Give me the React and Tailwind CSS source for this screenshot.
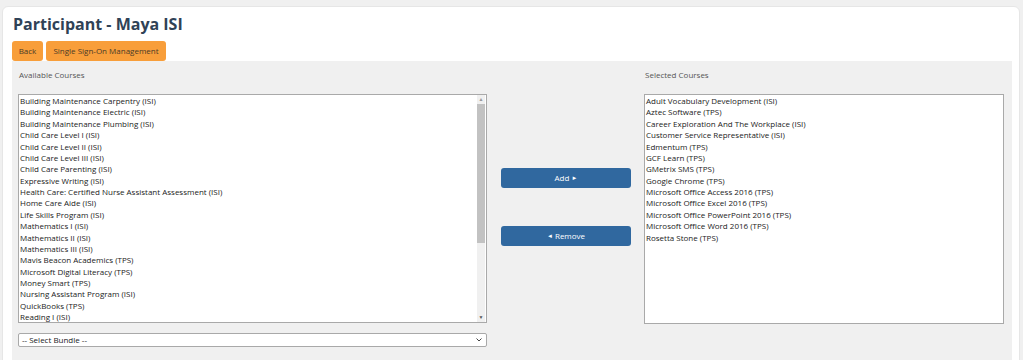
import React from "react";

const available = [
  "Building Maintenance Carpentry (ISI)",
  "Building Maintenance Electric (ISI)",
  "Building Maintenance Plumbing (ISI)",
  "Child Care Level I (ISI)",
  "Child Care Level II (ISI)",
  "Child Care Level III (ISI)",
  "Child Care Parenting (ISI)",
  "Expressive Writing (ISI)",
  "Health Care: Certified Nurse Assistant Assessment (ISI)",
  "Home Care Aide (ISI)",
  "Life Skills Program (ISI)",
  "Mathematics I (ISI)",
  "Mathematics II (ISI)",
  "Mathematics III (ISI)",
  "Mavis Beacon Academics (TPS)",
  "Microsoft Digital Literacy (TPS)",
  "Money Smart (TPS)",
  "Nursing Assistant Program (ISI)",
  "QuickBooks (TPS)",
  "Reading I (ISI)",
];

const selected = [
  "Adult Vocabulary Development (ISI)",
  "Aztec Software (TPS)",
  "Career Exploration And The Workplace (ISI)",
  "Customer Service Representative (ISI)",
  "Edmentum (TPS)",
  "GCF Learn (TPS)",
  "GMetrix SMS (TPS)",
  "Google Chrome (TPS)",
  "Microsoft Office Access 2016 (TPS)",
  "Microsoft Office Excel 2016 (TPS)",
  "Microsoft Office PowerPoint 2016 (TPS)",
  "Microsoft Office Word 2016 (TPS)",
  "Rosetta Stone (TPS)",
];

const font = { fontFamily: '"Open Sans", "Noto Sans", sans-serif' };

export default function App() {
  return (
    <div className="min-h-[360px] bg-[#f0f0f0] pt-[6px] pl-[2px] pr-[3px]" style={font}>
      <div className="bg-white rounded-[6px] border border-[#e6e6e6] pl-[9px] pr-[7px] pt-[3px] min-h-[360px]">
        <h1 className="text-[16px] leading-[28px] font-bold text-[#2f4256] pl-[1px]">
          Participant - Maya ISI
        </h1>
        <div className="flex gap-[3px] mt-[3px]">
          <button className="h-[20px] w-[31px] bg-[#f89e3a] rounded-[3px] text-[8px] text-[#4b3a28] leading-[20px]">
            Back
          </button>
          <button className="h-[20px] w-[120px] bg-[#f89e3a] rounded-[3px] text-[8px] text-[#4b3a28] leading-[20px]">
            Single Sign-On Management
          </button>
        </div>
        <div className="bg-[#f0f0f0] pl-[6px] pr-[8px] pt-[8px] pb-[20px] flex">
          <div className="w-[469px] flex flex-col">
            <div className="text-[8px] leading-[12px] text-[#555] pl-[1px]">Available Courses</div>
            <div className="mt-[13px] h-[229px] border border-[#a9a9a9] bg-white flex overflow-hidden">
              <div className="flex-1 pl-[1px] overflow-hidden">
                {available.map((c) => (
                  <div key={c} className="text-[8px] leading-[11.37px] text-[#222] whitespace-nowrap">
                    {c}
                  </div>
                ))}
              </div>
              <div className="w-[8px] bg-[#f0f0f0] flex flex-col items-center mr-[1px]">
                <div className="h-[9px] flex items-center justify-center text-[#999] text-[5px]">▲</div>
                <div className="w-[8px] h-[139px] bg-[#c2c2c2]"></div>
                <div className="flex-1"></div>
                <div className="h-[9px] flex items-center justify-center text-[#555] text-[5px]">▼</div>
              </div>
            </div>
            <div className="mt-[10px] h-[14px] border border-[#a9a9a9] rounded-[2px] bg-white flex items-center justify-between pl-[3px] pr-[4px]">
              <span className="text-[8px] text-[#222] leading-[12px]">-- Select Bundle --</span>
              <svg width="6" height="4" viewBox="0 0 6 4">
                <path d="M0.5 0.5 L3 3 L5.5 0.5" fill="none" stroke="#444" strokeWidth="1" />
              </svg>
            </div>
          </div>
          <div className="w-[130px] ml-[14px] pt-[99px] flex flex-col gap-[38px]">
            <button className="h-[20px] w-full bg-[#30689f] rounded-[3px] text-white text-[8px] leading-[20px]">
              Add <span className="text-[6px] align-[1px]">►</span>
            </button>
            <button className="h-[20px] w-full bg-[#30689f] rounded-[3px] text-white text-[8px] leading-[20px]">
              <span className="text-[6px] align-[1px]">◄</span> Remove
            </button>
          </div>
          <div className="w-[360px] ml-[13px] flex flex-col">
            <div className="text-[8px] leading-[12px] text-[#555] pl-[1px]">Selected Courses</div>
            <div className="mt-[13px] h-[230px] border border-[#a9a9a9] bg-white pl-[1px] overflow-hidden">
              {selected.map((c) => (
                <div key={c} className="text-[8px] leading-[11.37px] text-[#222] whitespace-nowrap">
                  {c}
                </div>
              ))}
            </div>
          </div>
        </div>
      </div>
    </div>
  );
}
